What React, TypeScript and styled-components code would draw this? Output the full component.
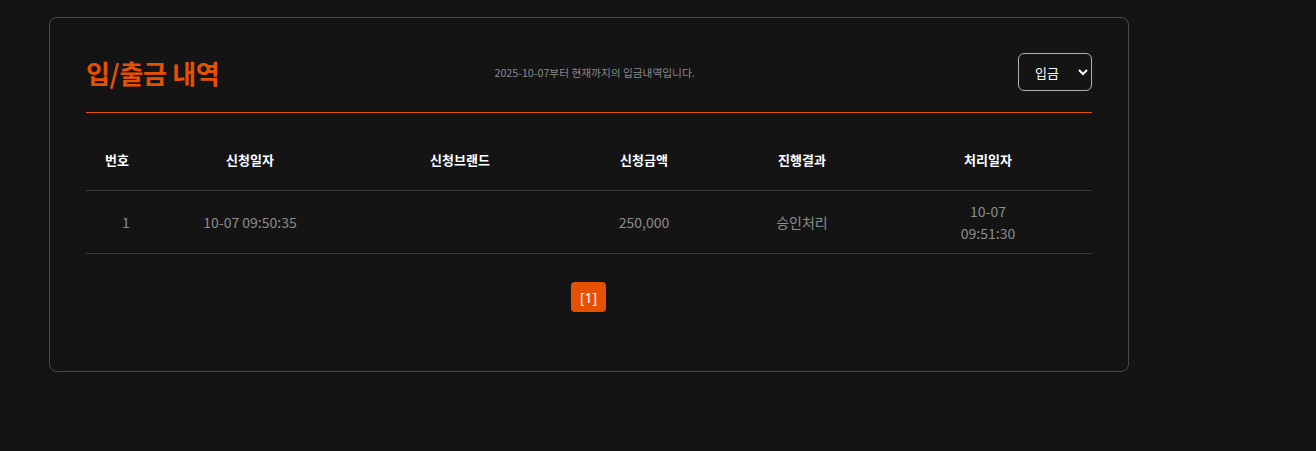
import styled, { createGlobalStyle } from "styled-components";

const GlobalStyle = createGlobalStyle`
  html, body {
    margin: 0;
    padding: 0;
    background: #141414;
  }
  body {
    font-family: "Noto Sans CJK KR", "Noto Sans", sans-serif;
    color: #fff;
  }
`;

const Page = styled.div`
  padding: 17px 0 0 49px;
  height: 451px;
  box-sizing: border-box;
`;

const Card = styled.section`
  width: 1080px;
  box-sizing: border-box;
  border: 1px solid #4a4a4a;
  border-radius: 8px;
  padding: 35px 36px 59px 36px;
  background: #141414;
`;

const Header = styled.div`
  display: flex;
  align-items: center;
  height: 38px;
  padding-bottom: 21px;
  border-bottom: 1px solid #e65100;
`;

const Title = styled.h2`
  margin: 0;
  font-size: 26px;
  font-weight: 700;
  color: #e65100;
  letter-spacing: -0.3px;
  white-space: nowrap;
`;

const Notice = styled.p`
  margin: 0 0 0 275px;
  font-size: 10.7px;
  color: #8a8a8a;
  flex: 1;
`;

const Select = styled.select`
  width: 74px;
  height: 38px;
  border: 1px solid #b0b0b0;
  border-radius: 6px;
  background: #141414;
  color: #fff;
  color-scheme: dark;
  font-family: "Noto Sans CJK KR", "Noto Sans", sans-serif;
  font-size: 13px;
  padding: 0 6px 0 12px;
`;

const Table = styled.table`
  width: 100%;
  margin-top: 15px;
  border-collapse: collapse;
  table-layout: fixed;
`;

const Th = styled.th<{ $w: number }>`
  width: ${(p) => p.$w}px;
  height: 62px;
  font-size: 13px;
  font-weight: 700;
  color: #fff;
  text-align: center;
  border-bottom: 1px solid #3a3a3a;
  padding: 0;
`;

const Td = styled.td<{ $indent?: number }>`
  height: 62px;
  font-size: 14px;
  line-height: 22px;
  color: #8c8c8c;
  text-align: center;
  border-bottom: 1px solid #3a3a3a;
  padding: 0 0 0 ${(p) => p.$indent ?? 0}px;
`;

const Pager = styled.div`
  display: flex;
  justify-content: center;
  margin-top: 28px;
`;

const PageButton = styled.button<{ $active?: boolean }>`
  width: 35px;
  height: 30px;
  margin-right: 1px;
  border: none;
  border-radius: 4px;
  background: ${(p) => (p.$active ? "#e65100" : "transparent")};
  color: #fff;
  font-family: "Noto Sans", sans-serif;
  font-size: 14px;
  padding: 0;
`;

const columns = [
  { label: "번호", w: 62 },
  { label: "신청일자", w: 204 },
  { label: "신청브랜드", w: 216 },
  { label: "신청금액", w: 152 },
  { label: "진행결과", w: 164 },
  { label: "처리일자", w: 208 },
];

export default function App() {
  return (
    <>
      <GlobalStyle />
      <Page>
        <Card>
          <Header>
            <Title>입/출금 내역</Title>
            <Notice>2025-10-07부터 현재까지의 입금내역입니다.</Notice>
            <Select defaultValue="deposit">
              <option value="deposit">입금</option>
              <option value="withdraw">출금</option>
            </Select>
          </Header>
          <Table>
            <thead>
              <tr>
                {columns.map((c) => (
                  <Th key={c.label} $w={c.w}>
                    {c.label}
                  </Th>
                ))}
              </tr>
            </thead>
            <tbody>
              <tr>
                <Td $indent={18}>1</Td>
                <Td>10-07 09:50:35</Td>
                <Td></Td>
                <Td>250,000</Td>
                <Td>승인처리</Td>
                <Td>
                  10-07
                  <br />
                  09:51:30
                </Td>
              </tr>
            </tbody>
          </Table>
          <Pager>
            <PageButton $active>[1]</PageButton>
          </Pager>
        </Card>
      </Page>
    </>
  );
}
